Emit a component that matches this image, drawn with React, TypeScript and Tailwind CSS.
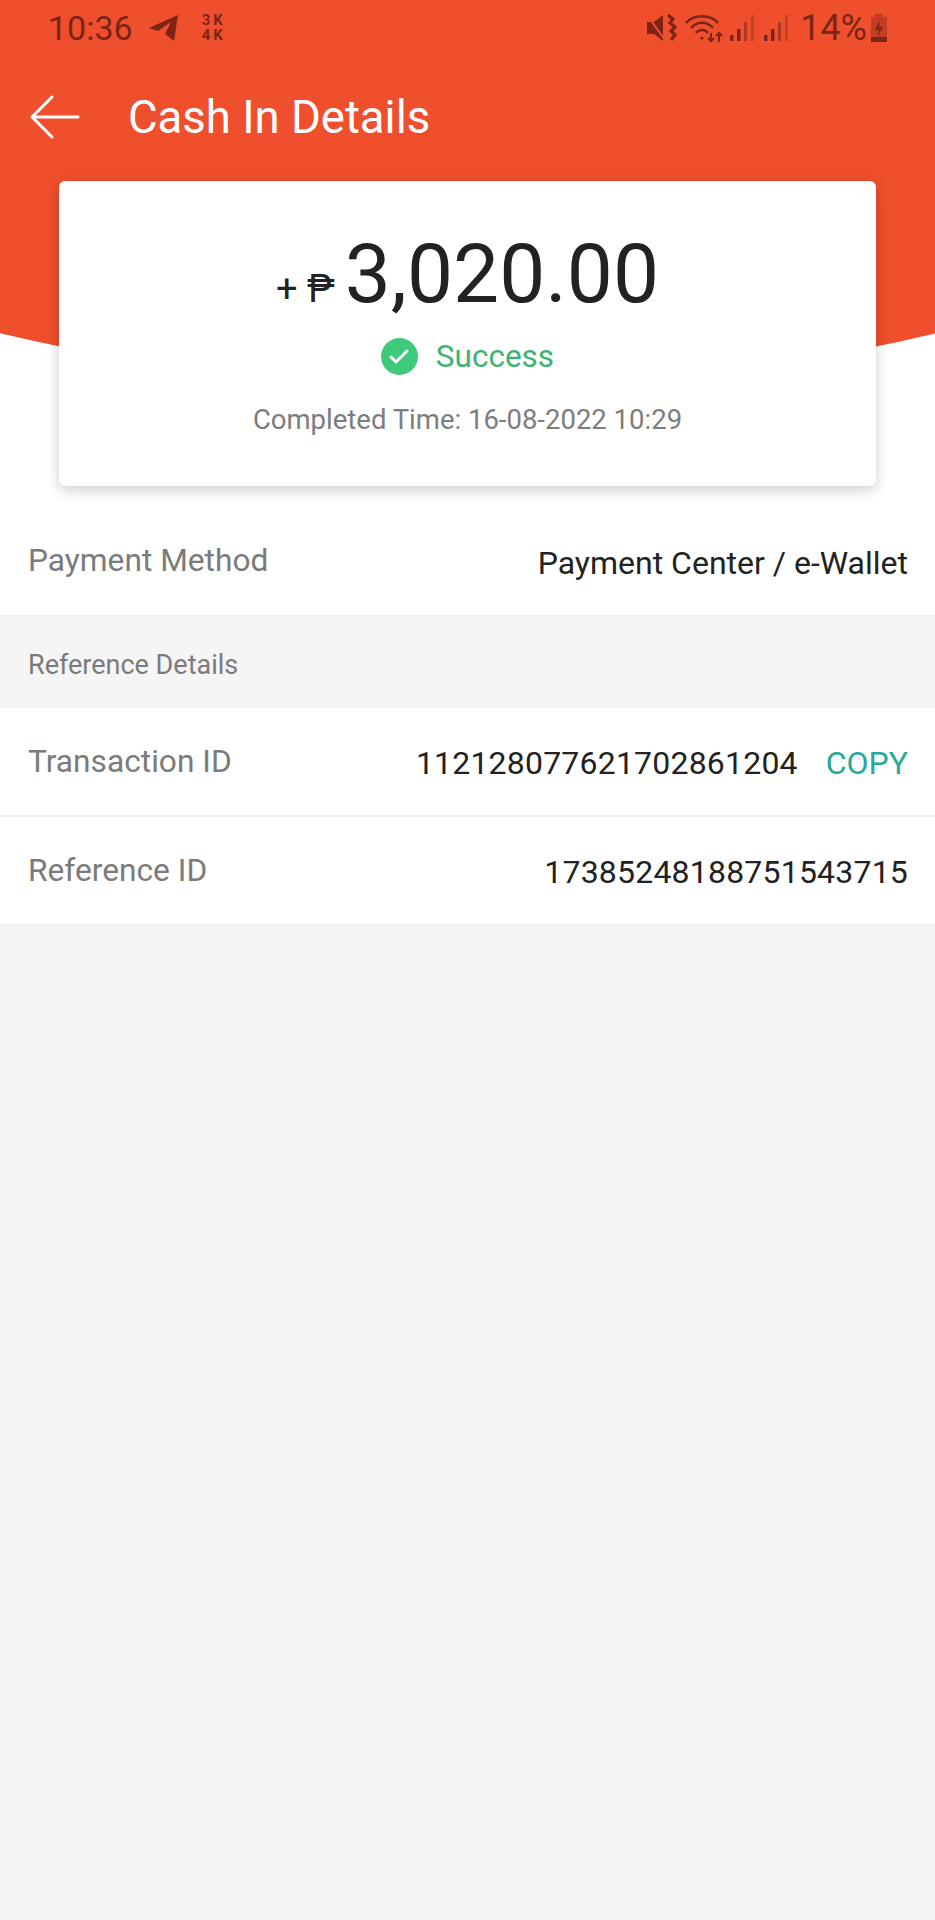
import React from 'react';
import { Check } from 'lucide-react';

const StatusIcons = {
  Telegram: () => (
    <svg width="32" height="28" viewBox="0 0 32 28" fill="currentColor">
      <path d="M1 14 30 1 26 27 17 20 23 8 10 17Z" />
    </svg>
  ),
  Mute: () => (
    <svg width="30" height="30" viewBox="0 0 30 30" fill="currentColor">
      <path d="M0 9h7l9-7v26l-9-7H0Z" />
      <path d="M0 2 18 27" stroke="#ef4f2c" strokeWidth="2" />
      <path d="M21 2l5 4-3 4 5 4-4 4 4 4-4 5" fill="none" stroke="currentColor" strokeWidth="3.2" />
    </svg>
  ),
  Wifi: () => (
    <svg width="38" height="30" viewBox="0 0 38 30" fill="none" stroke="currentColor" strokeWidth="2.6">
      <path d="M1 10C9 1 25 1 33 10" />
      <path d="M6 15C12 8 22 8 28 15" />
      <path d="M11 20c3-4 9-4 12 0" />
      <circle cx="17" cy="25" r="1.6" fill="currentColor" stroke="none" />
      <path d="M26 20v8M23 25l3 3 3-3M34 29v-9M31 23l3-3 3 3" strokeWidth="2" />
    </svg>
  ),
  Signal: () => (
    <svg width="26" height="28" viewBox="0 0 26 28">
      <rect x="1" y="21" width="3.5" height="6" fill="currentColor" />
      <rect x="8" y="15" width="3.5" height="12" fill="currentColor" />
      <rect x="15" y="8" width="3" height="19" fill="currentColor" opacity="0.55" />
      <rect x="22" y="1" width="3" height="26" fill="currentColor" opacity="0.35" />
    </svg>
  ),
  Battery: () => (
    <svg width="20" height="30" viewBox="0 0 20 30">
      <path d="M6 1h8v3h4v25H2V4h4Z" fill="currentColor" opacity="0.4" />
      <path d="M2 24h16v5H2Z" fill="currentColor" />
      <path d="M11 7 6 17h4l-2 7 6-10h-4Z" fill="currentColor" />
    </svg>
  ),
};

const DetailRow: React.FC<{ label: string; value: string; copy?: boolean }> = ({ label, value, copy }) => (
  <div className="flex h-[109px] items-center justify-between border-b-2 border-[#efefef] bg-white pl-[28px] pr-[27px]">
    <span className="text-[31.7px] text-[#7b7b7b]">{label}</span>
    <div className="flex items-center gap-[28px] pt-[2px] text-[32px] text-[#222222]">
      <span className="tracking-[0.2px]">{value}</span>
      {copy && <span className="text-[#26aa99]">COPY</span>}
    </div>
  </div>
);

const App: React.FC = () => {
  return (
    <div className="min-h-[1920px] w-[935px] bg-[#f5f5f5] font-['Roboto',sans-serif]">
      <div className="relative overflow-hidden bg-white">
        <div className="absolute left-[-1562px] top-[-3672px] h-[4060px] w-[4060px] rounded-full bg-[#ef4f2c]" />

        <div className="relative">
          <div className="flex h-[56px] items-center justify-between pl-[48px] pr-[46px] text-[#7c2416]">
            <div className="flex items-center">
              <span className="text-[34px] leading-none">10:36</span>
              <span className="ml-[15px]"><StatusIcons.Telegram /></span>
              <div className="ml-[22px] text-[15px] font-bold leading-[15px] tracking-[3px]">
                <div>3K</div>
                <div>4K</div>
              </div>
            </div>
            <div className="flex items-center">
              <StatusIcons.Mute />
              <span className="ml-[8px]"><StatusIcons.Wifi /></span>
              <span className="ml-[6px]"><StatusIcons.Signal /></span>
              <span className="ml-[8px]"><StatusIcons.Signal /></span>
              <span className="ml-[11px] text-[36px] leading-none">14%</span>
              <span className="ml-[2px]"><StatusIcons.Battery /></span>
            </div>
          </div>

          <div className="flex h-[122px] items-center pl-[30px] text-white">
            <svg width="50" height="44" viewBox="0 0 50 44" fill="none" stroke="currentColor" strokeWidth="3" strokeLinecap="round" strokeLinejoin="round">
              <path d="M2 22H48M22 2 2 22 22 42" />
            </svg>
            <h1 className="ml-[48px] pt-[2px] text-[45.5px] font-normal">Cash In Details</h1>
          </div>

          <div className="mx-[59px] mt-[3px] flex h-[305px] flex-col items-center rounded-[6px] bg-white shadow-[0_4px_14px_rgba(0,0,0,0.2)]">
            <div className="mt-[48px] flex items-baseline text-[#222222]">
              <span className="text-[38px] leading-none">+ ₱</span>
              <span className="ml-[10px] text-[82px] leading-[1.1]">3,020.00</span>
            </div>
            <div className="mt-[14px] flex items-center">
              <span className="flex h-[37px] w-[37px] items-center justify-center rounded-full bg-[#3fc97a]">
                <Check size={24} strokeWidth={3} color="white" />
              </span>
              <span className="ml-[18px] text-[31.5px] text-[#3cb371]">Success</span>
            </div>
            <p className="mt-[19px] text-[27.5px] text-[#7d7d7d]">Completed Time: 16-08-2022 10:29</p>
          </div>

          <div className="mt-[22px]">
            <div className="flex h-[109px] items-center justify-between border-b-2 border-[#efefef] pl-[28px] pr-[27px]">
              <span className="pb-[1px] text-[31.7px] text-[#7b7b7b]">Payment Method</span>
              <span className="pt-[2px] text-[32px] text-[#222222]">Payment Center / e-Wallet</span>
            </div>
          </div>
        </div>
      </div>

      <div className="flex h-[91px] items-center pl-[28px] pt-[5px] text-[27px] text-[#7b7b7b]">Reference Details</div>
      <DetailRow label="Transaction ID" value="112128077621702861204" copy />
      <DetailRow label="Reference ID" value="17385248188751543715" />
    </div>
  );
};

export default App;
